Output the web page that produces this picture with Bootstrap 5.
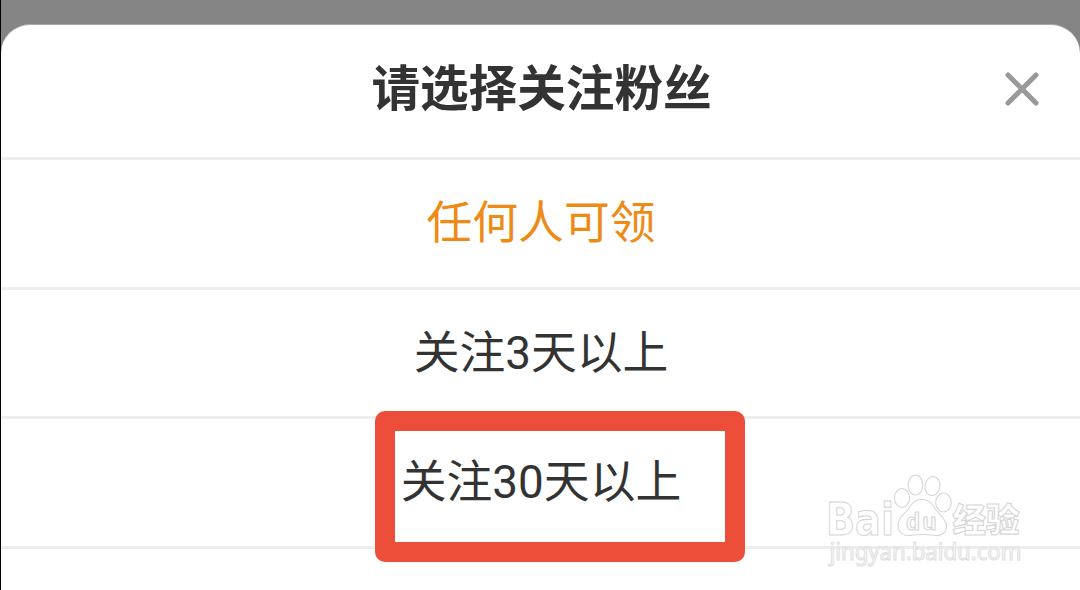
<!DOCTYPE html>
<html lang="zh-CN">
<head>
    <meta charset="UTF-8">
    <meta name="viewport" content="width=device-width, initial-scale=1.0">
    <title>请选择关注粉丝</title>
    <!-- Bootstrap CSS -->
    <link href="https://cdn.jsdelivr.net/npm/bootstrap@5.3.0/dist/css/bootstrap.min.css" rel="stylesheet">
    <style>
        body {
            height: 590px;
            padding-top: 24px;
            border-left: 1px solid #000;
            background-color: #848484;
            color: #333;
            font-family: Roboto, "Noto Sans CJK SC", sans-serif;
        }
        .sheet {
            height: 566px;
            border-top: 1px solid #a8a8a8;
            border-radius: 29px 29px 0 0;
        }
        .sheet-header {
            height: 135px;
            padding: 0 0 1px 2px;
            border-bottom: 3px solid #eee;
        }
        .sheet-title {
            font-size: 48.6px;
            font-weight: 700;
            line-height: 1;
        }
        .sheet-close {
            right: 39px;
            top: 45px;
            line-height: 0;
        }
        .option {
            height: 129.5px;
            padding: 2px 0 0 1px;
            border: 0;
            border-bottom: 3px solid #eee;
            background-color: transparent;
            color: inherit;
            font-size: 45.8px;
            line-height: 1;
        }
        .option.chosen {
            color: #ee8a16;
        }
        .marker {
            left: 374px;
            top: 411px;
            width: 370px;
            height: 151px;
            border: 20px solid #ed4e39;
            border-radius: 10px;
        }
        .watermark {
            left: 818px;
            top: 465px;
        }
    </style>
</head>
<body class="position-relative overflow-hidden">
    <div class="sheet bg-white overflow-hidden">
        <div class="sheet-header position-relative d-flex align-items-center justify-content-center">
            <h1 class="sheet-title m-0">请选择关注粉丝</h1>
            <button type="button" class="sheet-close position-absolute btn p-0 border-0" aria-label="关闭">
                <svg width="38" height="38" viewBox="0 0 38 38" fill="none" stroke="#999" stroke-width="5" stroke-linecap="round">
                    <path d="M5 5L33 33M33 5L5 33"/>
                </svg>
            </button>
        </div>
        <div class="d-flex flex-column">
            <button type="button" class="option chosen">任何人可领</button>
            <button type="button" class="option">关注3天以上</button>
            <button type="button" class="option">关注30天以上</button>
        </div>
    </div>

    <!-- Highlight frame around the third option -->
    <div class="marker position-absolute"></div>

    <svg class="watermark position-absolute" width="220" height="110" viewBox="820 465 220 110" fill="#fff" stroke="#d6d6d6" stroke-width="1.1">
        <text x="827" y="534.500" font-family="DejaVu Sans, sans-serif" font-weight="700" font-size="44" textLength="68" lengthAdjust="spacingAndGlyphs">Bai</text>
        <!-- Paw -->
        <ellipse cx="903" cy="498" rx="7.6" ry="9.5"/>
        <ellipse cx="916.5" cy="485" rx="7.3" ry="10"/>
        <ellipse cx="933.5" cy="486" rx="7.5" ry="9.5" transform="rotate(8 933.5 486)"/>
        <ellipse cx="944.5" cy="502.5" rx="7.8" ry="9.5"/>
        <path d="M923 499.500C931 499.500 934 505 937 510C941 515 948 520 947.500 527C947 534 941 536 936 535.500C930 534.500 918 534.500 911 535.500C904 536 899 532 899 525C899 517 906 514 910 508C913 503 916 499.500 923 499.500Z"/>
        <text x="907" y="530" font-family="Liberation Sans, sans-serif" font-weight="700" font-size="23" letter-spacing="2.5">du</text>
        <text x="953.500" y="532" font-family="Noto Sans CJK SC, sans-serif" font-weight="900" font-size="33.5">经验</text>
        <text x="830.500" y="560" font-family="Noto Sans, sans-serif" font-size="23" textLength="192" lengthAdjust="spacingAndGlyphs" stroke="#e0e0e0">jingyan.baidu.com</text>
    </svg>

    <!-- Bootstrap JS Bundle with Popper -->
    <script src="https://cdn.jsdelivr.net/npm/bootstrap@5.3.0/dist/js/bootstrap.bundle.min.js"></script>
</body>
</html>
